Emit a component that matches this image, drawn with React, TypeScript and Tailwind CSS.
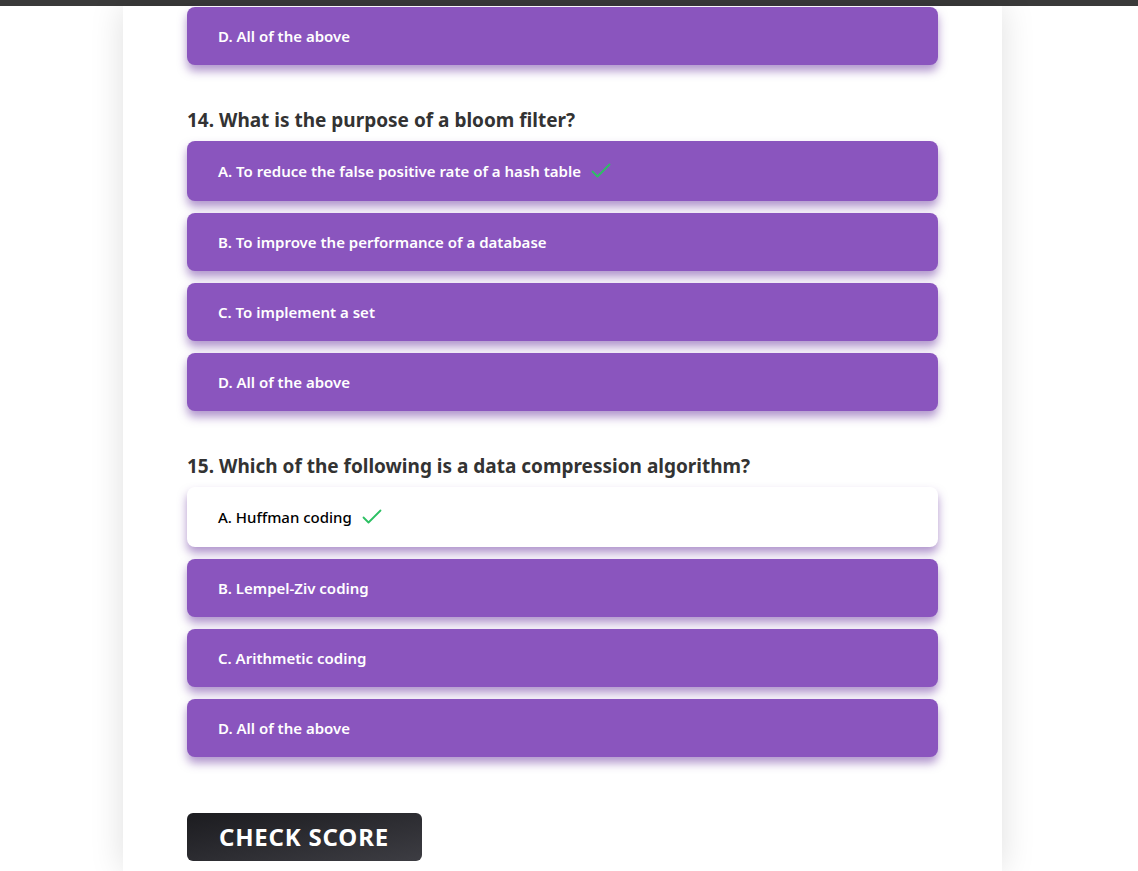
import { Fragment } from "react";

type Question = {
  id: number;
  title?: string;
  options: string[];
  answer?: number;
  selected?: number;
};

const questions: Question[] = [
  { id: 13, options: ["D. All of the above"] },
  {
    id: 14,
    title: "14. What is the purpose of a bloom filter?",
    options: [
      "A. To reduce the false positive rate of a hash table",
      "B. To improve the performance of a database",
      "C. To implement a set",
      "D. All of the above",
    ],
    answer: 0,
  },
  {
    id: 15,
    title: "15. Which of the following is a data compression algorithm?",
    options: ["A. Huffman coding", "B. Lempel-Ziv coding", "C. Arithmetic coding", "D. All of the above"],
    answer: 0,
    selected: 0,
  },
];

function CheckMark() {
  return (
    <svg width="20" height="20" viewBox="0 0 20 20" fill="none" className="ml-[10px] shrink-0">
      <path d="M1.5 10.5 L6.5 15.5 L18.5 3.5" stroke="#2cc063" strokeWidth="1.8" strokeLinecap="round" strokeLinejoin="round" />
    </svg>
  );
}

export default function App() {
  return (
    <div className="min-h-[871px] bg-white font-['Noto_Sans',sans-serif] overflow-hidden">
      {/* top bar */}
      <div className="h-[6px] bg-[#3a3a3a]" />

      <div className="ml-[123px] w-[879px] min-h-[865px] bg-white shadow-[0_0_32px_rgba(0,0,0,0.13)] px-16 pt-px">
        {questions.map((q) => (
          <div key={q.id} className="mb-[41px]">
            {q.title && <h2 className="text-[19px] leading-7 font-bold text-[#333] mb-[7px]">{q.title}</h2>}
            {q.options.map((opt, i) => {
              const isSelected = q.selected === i;
              return (
                <Fragment key={opt}>
                  <div
                    className={
                      "flex items-center rounded-lg px-[31px] py-5 mb-3 text-[15px] leading-[18px] shadow-[0_6px_10px_rgba(100,45,155,0.5)] " +
                      (isSelected ? "bg-white text-black font-medium" : "bg-[#8a55be] text-white font-semibold")
                    }
                  >
                    <span>{opt}</span>
                    {q.answer === i && <CheckMark />}
                  </div>
                </Fragment>
              );
            })}
          </div>
        ))}

        <button className="mt-[15px] w-[235px] h-12 rounded-md bg-gradient-to-br from-[#1c1c20] to-[#3d3d43] text-white text-[24px] font-bold tracking-[0.8px] text-left pl-[32px]">
          CHECK SCORE
        </button>
      </div>
    </div>
  );
}
